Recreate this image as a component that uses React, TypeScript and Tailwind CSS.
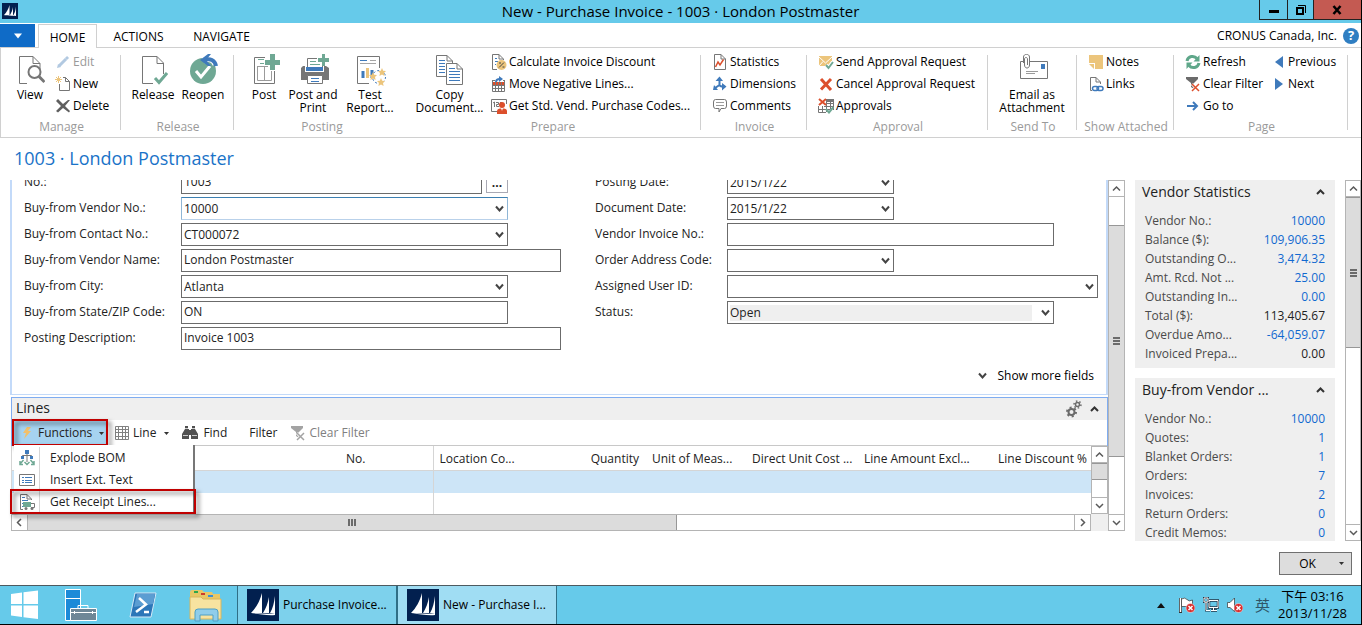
import { useId, type ReactNode } from "react";

const GREY = "#767676";
const BLUE = "#3f7abb";
const GREEN = "#6fa894";
const SAND = "#ecc57c";
const RED = "#dc4f2c";

type IconProps = { w: number; h: number; children: ReactNode };

function Icon({ w, h, children }: IconProps) {
  return (
    <svg
      width={w}
      height={h}
      viewBox={`0 0 ${w} ${h}`}
      fill="none"
      className="block shrink-0"
      aria-hidden="true"
    >
      {children}
    </svg>
  );
}

/* ---------- large ribbon icons ---------- */

const ViewIcon = () => (
  <Icon w={30} h={32}>
    <path d="M12 29.5H4.5V2.5H18L25 9.5V15M18 2.5V9.5H25" stroke={GREY} />
    <circle cx="19.500" cy="18" r="6" fill="#fff" stroke={GREY} strokeWidth="2" />
    <path d="M24 22.5L29.500 28" stroke={GREY} strokeWidth="3" />
  </Icon>
);

const ReleaseIcon = () => (
  <Icon w={30} h={32}>
    <path d="M15 29.5H4.500V2.500H19L25.500 9V20M19 2.500V9.500H25.500" stroke={GREY} />
    <path d="M17 24L21 28.500L29 19" stroke={GREEN} strokeWidth="3" />
  </Icon>
);

const ReopenIcon = () => (
  <Icon w={30} h={32}>
    <circle cx="15" cy="17" r="13" fill={GREEN} />
    <path d="M8 17L13 23L22 12" stroke="#fff" strokeWidth="3" />
    <path d="M28 11C27 5 21 3 15 6" stroke="#fff" strokeWidth="7" />
    <path d="M28 12C27 6 22 4 16 6" stroke={BLUE} strokeWidth="4" />
    <path d="M12 6L20 0H23L18 6L23 12H20Z" fill={BLUE} />
  </Icon>
);

const PostIcon = () => (
  <Icon w={32} h={32}>
    <path d="M17 3.500H6.500V29.500H26.500V17" stroke={GREY} />
    <path d="M9.500 12.500H20M9.500 12V26.500H23.500V17M16.500 12V26" stroke="#9b9b9b" />
    <path d="M10 5.500H16M12 9.500H16" stroke={GREEN} />
    <path d="M17 6h5V0h5v6h5v5h-5v5h-5v-5h-5z" fill={GREEN} />
  </Icon>
);

const PrintIcon = () => (
  <Icon w={32} h={32}>
    <path d="M10.500 13V4.500H20M25.500 13V10" stroke={GREY} />
    <path d="M13 7.500H19M13 10.500H23" stroke={GREEN} />
    <path d="M9 13H26V17H9Z" fill={BLUE} />
    <path d="M6 12H8V18H27V12H29L32 14V26H4V14Z" fill={GREY} />
    <path d="M10.500 21.500H25.500V29.500H10.500Z" fill="#fff" stroke={GREY} />
    <path d="M14 24.500H22M14 27.500H22" stroke={BLUE} />
    <path d="M21 4h4V0h3v4h4v4h-4v4h-3V8h-4z" fill={GREEN} />
  </Icon>
);

const STAR =
  "M0 -4L1.200 -1.300L4 -1L2 1L2.600 4L0 2.500L-2.600 4L-2 1L-4 -1L-1.200 -1.300Z";

const ReportIcon = () => (
  <Icon w={32} h={32}>
    <path d="M15 29.500H3.500V2.500H25.500V14" stroke={GREY} />
    <path d="M6 6.500H13" stroke={BLUE} />
    <path d="M6 9.500H22" stroke="#a5a5a5" />
    <path d="M16 6.500H22" stroke="#a5a5a5" />
    <path d="M9 24V17M18 24V16" stroke={BLUE} strokeWidth="3" />
    <path d="M13.500 24V14" stroke={SAND} strokeWidth="3" />
    <circle cx="25" cy="23" r="6.500" stroke={BLUE} strokeDasharray="2 2" />
    <path d={STAR} transform="translate(19 22)" fill={SAND} />
    <path d={STAR} transform="translate(28 18)" fill={SAND} />
    <path d={STAR} transform="translate(27 28)" fill={SAND} />
  </Icon>
);

const CopyIcon = () => (
  <Icon w={30} h={32}>
    <path d="M1.500 1.500H12L17.500 7V22.500H1.500Z" fill="#fff" stroke={GREY} />
    <path d="M12 1.500V7H17.500" stroke={GREY} />
    <path d="M4 6.500H10M4 9.500H10M4 12.500H10M4 15.500H10M4 18.500H10" stroke={BLUE} />
    <path d="M11.500 9.500H22L27.500 15V30.500H11.500Z" fill="#fff" stroke={GREY} />
    <path d="M22 9.500V15H27.500" stroke={GREY} />
    <path d="M14 14.500H20M14 17.500H25M14 20.500H25M14 23.500H25M14 26.500H25" stroke={BLUE} />
  </Icon>
);

const EmailIcon = () => (
  <Icon w={32} h={32}>
    <path d="M4.500 7.500H31.500V24.500H4.500Z" stroke={GREY} />
    <path d="M25 10H29V15H25Z" fill={BLUE} />
    <path d="M10 17.500H22M10 19.500H19" stroke="#9b9b9b" />
    <path
      d="M7.500 9V3C7.500 -0.500 13.500 -0.500 13.500 3V11C13.500 15 8.500 15 8.500 11V5C8.500 3 11.500 3 11.500 5V11"
      fill="#fff"
      stroke={GREY}
    />
  </Icon>
);

/* ---------- small ribbon icons ---------- */

const EditIcon = () => (
  <Icon w={16} h={16}>
    <path d="M4 12L11 5" stroke="#b2c9e1" strokeWidth="3" />
    <path d="M11 3L13 5" stroke="#b2c9e1" strokeWidth="3" />
    <path d="M2 14L3 10L6 13Z" fill="#b2c9e1" />
  </Icon>
);

const NewIcon = () => (
  <Icon w={16} h={16}>
    <path d="M8 1.500H10.500L14.500 5.500V14.500H4.500V8M10.500 1.500V5.500H14.500" stroke={GREY} />
    <path d="M3.500 0V7M0 3.500H7M1 1L6 6M6 1L1 6" stroke={SAND} />
  </Icon>
);

const DeleteIcon = () => (
  <Icon w={16} h={16}>
    <path d="M1 3L3 1L8 6L13 2L15 2L10 8L15 13L14 14.500L8 10L3 14.500L1 13L6 8Z" fill="#5f5f5f" />
  </Icon>
);

const DiscountIcon = () => (
  <Icon w={16} h={16}>
    <path d="M6 15.500H1.500V0.500H8L12.500 5V6M8 0.500V5H12" stroke={GREY} />
    <path d="M4 4.500H6M4 7.500H7M4 10.500H5" stroke={BLUE} />
    <circle cx="10.500" cy="11" r="5" fill={SAND} />
    <path d="M8 13.500L13 8.500M8 9H10M11.500 13H13.500" stroke="#444" />
  </Icon>
);

const MoveIcon = () => (
  <Icon w={16} h={16}>
    <path d="M1 4H4V5H1ZM12 4H14V5H12Z" fill={GREY} />
    <path d="M1 6H14V9H1Z" fill={RED} />
    <path d="M1.500 4V15.500H13.500V4M1 9.500H14M1 12.500H14M4.500 6V15M7.500 6V15M10.500 6V15" stroke={GREY} />
    <path d="M5 6C5 3 7 3 9 3" stroke={BLUE} strokeWidth="2" />
    <path d="M8 0L12 3L8 6Z" fill={BLUE} />
  </Icon>
);

const CodesIcon = () => (
  <Icon w={16} h={16}>
    <path d="M8 13.500H0.500V1.500H15.500V6" stroke={GREY} />
    <path d="M2 5L3.500 4V9M5 4.500H7.500V6.500H5.500V8.500H8M9 4.500H11" stroke={GREY} />
    <circle cx="11" cy="7" r="3" fill={RED} />
    <path d="M6 16V13C6 11 8 10.500 11 10.500S16 11 16 13V16Z" fill={RED} />
    <path d="M10 10H12L11 13Z" fill="#fff" />
  </Icon>
);

const StatisticsIcon = () => (
  <Icon w={16} h={16}>
    <path d="M2.500 0.500H9L13.500 5V15.500H2.500ZM9 0.500V5H13.500" stroke={GREY} />
    <path d="M3.500 13L6 8L8 11L11.500 5.500" stroke={RED} strokeWidth="1.500" />
  </Icon>
);

const DimensionsIcon = () => (
  <Icon w={16} h={16}>
    <path d="M7.500 3V9L3 12M7 9C9 11 11 11 13 10.500" stroke={BLUE} strokeWidth="2" />
    <path d="M3.500 5L7.500 0.500L11 5ZM2 9L6 14H1ZM10 7L14.500 10.500L10 14.500Z" fill={BLUE} />
  </Icon>
);

const CommentsIcon = () => (
  <Icon w={16} h={16}>
    <path
      d="M3.500 1.500H12.500Q14.500 1.500 14.500 4V8Q14.500 10.500 12.500 10.500H9L7 14V10.500H3.500Q1.500 10.500 1.500 8V4Q1.500 1.500 3.500 1.500Z"
      stroke={GREY}
    />
    <path d="M4 4.500H12M4 7.500H12" stroke="#9b9b9b" />
  </Icon>
);

const SendIcon = () => (
  <Icon w={16} h={16}>
    <path d="M1 2H14V12H1Z" fill={SAND} />
    <path d="M1 3L7.500 9L14 3M1 12L5 7.500" stroke="#fff" />
    <path d="M8 11L10.500 14L15 8" stroke="#fff" strokeWidth="4" />
    <path d="M8 11L10.500 14L15 8" stroke={GREEN} strokeWidth="2" />
  </Icon>
);

const CancelIcon = () => (
  <Icon w={16} h={16}>
    <path d="M3 3L13 14M13 3L3 13.500" stroke={RED} strokeWidth="3" />
  </Icon>
);

const ApprovalsIcon = () => (
  <Icon w={16} h={16}>
    <path d="M8 1.500H15.500V12M0.500 8V14.500H8M0 11.500H12M4.500 8V14M8.500 2V14M12.500 2V11M8 5.500H15M6 8.500H15" stroke={GREY} />
    <path d="M9 1H16V4H9Z" fill={GREY} />
    <path d="M1 1L8 7M8 1L1 7" stroke={RED} strokeWidth="2" />
    <path d="M8 11L11 14.500L15.500 9" stroke={GREEN} strokeWidth="2" />
  </Icon>
);

const NotesIcon = () => (
  <Icon w={16} h={16}>
    <path d="M1 1H15V15H7V9H1Z" fill={SAND} />
    <path d="M1 10H6V15Z" fill={SAND} />
  </Icon>
);

const LinksIcon = () => (
  <Icon w={16} h={16}>
    <path d="M4 14.500H2.500V1.500H8L12.500 6V8M8 1.500V6H12" stroke={GREY} />
    <rect x="4.500" y="10.500" width="6" height="4" rx="2" stroke={BLUE} strokeWidth="1.500" />
    <rect x="9" y="10.500" width="6" height="4" rx="2" stroke={BLUE} strokeWidth="1.500" />
  </Icon>
);

const RefreshIcon = () => (
  <Icon w={16} h={16}>
    <path d="M2 7C3 2 9 1 12 4.500M14 9C13 14 7 15 4 11.500" stroke="#5fa78a" strokeWidth="3" />
    <path d="M14.500 1V7.500H8.500ZM1.500 15V8.500H7.500Z" fill="#5fa78a" />
  </Icon>
);

function ClearFilterIcon({ muted }: { muted?: boolean }) {
  return (
    <Icon w={16} h={16}>
      <path d="M1 1H13V3L9 7V13L6 11V7L1 3Z" fill={muted ? "#a3a3a3" : "#6b6b6b"} />
      <path d="M7 8L14 15M14 8L7 15" stroke="#fff" strokeWidth="3" />
      <path d="M7 8L14 15M14 8L7 15" stroke={muted ? "#a3a3a3" : RED} strokeWidth="1.500" />
    </Icon>
  );
}

const GotoIcon = () => (
  <Icon w={16} h={16}>
    <path d="M2 8H12M8 4L12 8L8 12" stroke={BLUE} strokeWidth="2" />
  </Icon>
);

const PreviousIcon = () => (
  <Icon w={10} h={16}>
    <path d="M9 2V14L1 8Z" fill={BLUE} />
  </Icon>
);

const NextIcon = () => (
  <Icon w={10} h={16}>
    <path d="M1 2V14L9 8Z" fill={BLUE} />
  </Icon>
);

/* ---------- lines toolbar and menu icons ---------- */

const BoltIcon = () => (
  <Icon w={10} h={14}>
    <path d="M5 1H9L6 5H9L2 13L4 7H1Z" fill="#f2c069" />
  </Icon>
);

const GridIcon = () => (
  <Icon w={14} h={14}>
    <path
      d="M0.500 0.500H13.500V13.500H0.500ZM0.500 3.500H13.500M0.500 6.500H13.500M0.500 10.500H13.500M3.500 0.500V13.500M7.500 0.500V13.500M10.500 0.500V13.500"
      stroke="#808080"
    />
  </Icon>
);

const FindIcon = () => (
  <Icon w={16} h={14}>
    <path d="M3 0H6V3H7V13H0V8L3 3ZM10 0H13V3L16 8V13H9V3H10ZM6 4H10V9H6Z" fill="#505050" />
    <path d="M1 9.500H6M10 9.500H15M3 2.500H6M10 2.500H13" stroke="#ccc" />
  </Icon>
);

const BomIcon = () => (
  <Icon w={16} h={16}>
    <path d="M6 0H10V4H6ZM2 6H5V9H2ZM11 6H14V9H11Z" fill={BLUE} />
    <path d="M8 4V12M3.500 6V5.500H12.500V6" stroke={GREY} />
    <path d="M4.500 10L1 14M1 11V14.500H4M11.500 10L15 14M15 11V14.500H12M5.500 12L8 14.500L10.500 12" stroke={GREEN} strokeWidth="1.500" />
  </Icon>
);

const TextIcon = () => (
  <Icon w={16} h={16}>
    <path d="M0.500 2.500H15.500V13.500H0.500Z" fill="#fff" stroke={GREY} />
    <path d="M3 5.500H5M3 8.500H5M3 10.500H5" stroke={BLUE} />
    <path d="M6 5.500H13M6 8.500H13M6 10.500H13" stroke={BLUE} />
  </Icon>
);

const ReceiptIcon = () => (
  <Icon w={16} h={16}>
    <path d="M4 15.500H1.500V0.500H8L12.500 5V6M8 0.500V5H12" stroke={GREY} />
    <path d="M3 3.500H6M3 6.500H9M3 9.500H4M3 12.500H4" stroke={BLUE} />
    <path d="M4 8H12V13H4Z" fill={GREEN} />
    <path d="M12 9.500H15.500V13.500H12" stroke={GREY} />
    <circle cx="7" cy="14.500" r="1.500" fill={GREY} />
    <circle cx="13" cy="14.500" r="1.500" fill={GREY} />
  </Icon>
);

const GearsIcon = () => (
  <Icon w={16} h={18}>
    <circle cx="5.500" cy="12" r="3" stroke="#6b6b6b" strokeWidth="2" />
    <circle cx="5.500" cy="12" r="4.500" stroke="#6b6b6b" strokeWidth="2" strokeDasharray="2 2.700" />
    <circle cx="11.500" cy="4.500" r="2" stroke="#6b6b6b" strokeWidth="1.500" />
    <circle cx="11.500" cy="4.500" r="3.500" stroke="#6b6b6b" strokeWidth="1.500" strokeDasharray="1.500 2.100" />
  </Icon>
);

const ChevronDown = () => (
  <Icon w={9} h={8}>
    <path d="M1 1.500L4.500 5.500L8 1.500" stroke="#444" strokeWidth="2" />
  </Icon>
);

const ChevronUp = () => (
  <Icon w={9} h={8}>
    <path d="M1 6L4.500 2.500L8 6" stroke="#333" strokeWidth="2" />
  </Icon>
);

const Caret = () => (
  <Icon w={5} h={3}>
    <path d="M0 0H5L2.500 3Z" fill="#333" />
  </Icon>
);

function SailLogo({ size }: { size: number }) {
  return (
    <svg width={size} height={size} viewBox="0 0 32 32" className="block shrink-0" aria-hidden="true">
      <path d="M0 0H32V32H0Z" fill="#02204f" />
      <path d="M15 4V24H4C9 19 13 12 15 4ZM22 8V24H16C19 19 21 14 22 8ZM28 7V24H23C26 19 27 14 28 7Z" fill="#fff" />
      <path d="M3 25C10 23 20 26 28 24V26C19 27 10 24 3 25Z" fill="#fff" />
    </svg>
  );
}

/* ---------- ribbon ---------- */

function Group({ label, className, children }: { label: string; className: string; children: ReactNode }) {
  return (
    <section aria-label={label} className={`flex shrink-0 ${className}`}>
      <div className="flex-1">
        <div className="flex h-[68px]">{children}</div>
        <div className="pl-[2px] text-center leading-4 text-[#9a9a9a]">{label}</div>
      </div>
      <div className="mt-1 h-[75px] w-px bg-[#d0d0d0]" />
    </section>
  );
}

function BigButton({ icon, label, className }: { icon: ReactNode; label: string; className: string }) {
  return (
    <button type="button" className={`flex shrink-0 flex-col items-center pt-[3px] ${className}`}>
      {icon}
      <span className="pt-[2px] leading-[13px] whitespace-pre">{label}</span>
    </button>
  );
}

function SmallButton({ icon, disabled, children }: { icon: ReactNode; disabled?: boolean; children: ReactNode }) {
  return (
    <button type="button" disabled={disabled} className="flex h-[22px] items-center gap-[2px] whitespace-nowrap disabled:text-[#9a9a9a]">
      {icon}
      {children}
    </button>
  );
}

function Ribbon() {
  return (
    <div className="flex h-[91px] overflow-hidden border-y border-l border-[#d0d0d0] pt-[3px]">
      <Group label="Manage" className="w-[120px]">
        <BigButton icon={<ViewIcon />} label="View" className="w-[54px] pl-1" />
        <div>
          <SmallButton icon={<EditIcon />} disabled>Edit</SmallButton>
          <SmallButton icon={<NewIcon />}>New</SmallButton>
          <SmallButton icon={<DeleteIcon />}>Delete</SmallButton>
        </div>
      </Group>
      <Group label="Release" className="w-[113px]">
        <BigButton icon={<ReleaseIcon />} label="Release" className="w-[64px]" />
        <BigButton icon={<ReopenIcon />} label="Reopen" className="w-[36px]" />
      </Group>
      <Group label="Posting" className="w-[170px]">
        <BigButton icon={<PostIcon />} label="Post" className="w-[60px]" />
        <BigButton icon={<PrintIcon />} label={"Post and\nPrint"} className="w-[38px]" />
        <BigButton icon={<ReportIcon />} label={"Test\nReport..."} className="w-[76px]" />
      </Group>
      <Group label="Prepare" className="w-[297px]">
        <BigButton icon={<CopyIcon />} label={"Copy\nDocument..."} className="w-[87px] pl-1" />
        <div>
          <SmallButton icon={<DiscountIcon />}>Calculate Invoice Discount</SmallButton>
          <SmallButton icon={<MoveIcon />}>Move Negative Lines...</SmallButton>
          <SmallButton icon={<CodesIcon />}>Get Std. Vend. Purchase Codes...</SmallButton>
        </div>
      </Group>
      <Group label="Invoice" className="w-[106px]">
        <div className="pl-[11px]">
          <SmallButton icon={<StatisticsIcon />}>Statistics</SmallButton>
          <SmallButton icon={<DimensionsIcon />}>Dimensions</SmallButton>
          <SmallButton icon={<CommentsIcon />}>Comments</SmallButton>
        </div>
      </Group>
      <Group label="Approval" className="w-[181px]">
        <div className="pl-[11px]">
          <SmallButton icon={<SendIcon />}>Send Approval Request</SmallButton>
          <SmallButton icon={<CancelIcon />}>Cancel Approval Request</SmallButton>
          <SmallButton icon={<ApprovalsIcon />}>Approvals</SmallButton>
        </div>
      </Group>
      <Group label="Send To" className="w-[89px]">
        <BigButton icon={<EmailIcon />} label={"Email as\nAttachment"} className="w-[88px]" />
      </Group>
      <Group label="Show Attached" className="w-[97px]">
        <div className="pl-[11px]">
          <SmallButton icon={<NotesIcon />}>Notes</SmallButton>
          <SmallButton icon={<LinksIcon />}>Links</SmallButton>
        </div>
      </Group>
      <Group label="Page" className="w-[174px]">
        <div className="w-[100px] pl-[11px]">
          <SmallButton icon={<RefreshIcon />}>Refresh</SmallButton>
          <SmallButton icon={<ClearFilterIcon />}>Clear Filter</SmallButton>
          <SmallButton icon={<GotoIcon />}>Go to</SmallButton>
        </div>
        <div>
          <SmallButton icon={<PreviousIcon />}>
            <span className="pl-[2px]">Previous</span>
          </SmallButton>
          <SmallButton icon={<NextIcon />}>
            <span className="pl-[2px]">Next</span>
          </SmallButton>
        </div>
      </Group>
    </div>
  );
}

/* ---------- scrollbars ---------- */

function Arrow({ d }: { d: string }) {
  return (
    <Icon w={9} h={9}>
      <path d={d} stroke="#5a5a5a" strokeWidth="1.500" />
    </Icon>
  );
}

type VScrollProps = { width: string; before: string; thumb: string; grip?: boolean };

function VScroll({ width, before, thumb, grip }: VScrollProps) {
  return (
    <div className={`flex shrink-0 flex-col border border-[#b4b4b4] bg-white ${width}`}>
      <button type="button" aria-label="Scroll up" className="flex h-4 shrink-0 items-center justify-center border-b border-[#b4b4b4]">
        <Arrow d="M1 6.500L4.500 3L8 6.500" />
      </button>
      <div className={before} />
      <div className={`flex flex-col items-center justify-center gap-px border-y border-[#979797] bg-[#dcdcdc] ${thumb}`}>
        {grip && [0, 1, 2].map((i) => <div key={i} className="h-[2px] w-[7px] bg-[#6b6b6b]" />)}
      </div>
      <div className="flex-1" />
      <button type="button" aria-label="Scroll down" className="flex h-4 shrink-0 items-center justify-center border-t border-[#b4b4b4]">
        <Arrow d="M1 3L4.500 6.500L8 3" />
      </button>
    </div>
  );
}

/* ---------- general fast tab ---------- */

type FieldProps = {
  label: string;
  value?: string;
  width: string;
  kind?: "text" | "select";
  active?: boolean;
  readOnly?: boolean;
  assist?: boolean;
  labelWidth: string;
};

function Field({ label, value = "", width, kind = "text", active, readOnly, assist, labelWidth }: FieldProps) {
  const id = useId();
  const border = active
    ? "border-x-[#8fb6d6] border-t-[#3c7fb1] border-b-[#b9d1ea]"
    : "border-[#6b6b6b]";
  return (
    <div className="flex h-[23px]">
      <label htmlFor={id} className={`shrink-0 leading-[22px] ${labelWidth}`}>
        {label}
      </label>
      <div className={`flex items-center border bg-white ${border} ${width}`}>
        {kind === "select" ? (
          <>
            <select
              id={id}
              defaultValue={value}
              className={`h-4 min-w-0 flex-1 appearance-none leading-4 outline-none ${readOnly ? "mr-[9px] ml-[2px] bg-[#efefef]" : "pl-[2px]"}`}
            >
              <option value={value}>{value}</option>
            </select>
            <span className="pointer-events-none pr-[3px]">
              <ChevronDown />
            </span>
          </>
        ) : (
          <input id={id} defaultValue={value} className="h-5 w-full min-w-0 pb-[2px] pl-[2px] outline-none" />
        )}
      </div>
      {assist && (
        <button
          type="button"
          aria-label="Number series"
          className="ml-1 h-[22px] w-[22px] border border-[#a9a9b4] bg-white leading-[22px] font-bold"
        >
          ...
        </button>
      )}
    </div>
  );
}

function GeneralTab() {
  const l = "w-[157px]";
  const r = "w-[132px]";
  return (
    <div className="flex h-[215px] flex-col justify-end overflow-hidden border-x-2 border-b border-[#c3daf9] pr-2 pl-3">
      <div className="grid grid-cols-[537fr_503fr] gap-x-[34px]">
        <div className="space-y-[3px]">
          <Field label="No.:" value="1003" width="w-[301px]" labelWidth={l} assist />
          <Field label="Buy-from Vendor No.:" value="10000" width="w-[327px]" labelWidth={l} kind="select" active />
          <Field label="Buy-from Contact No.:" value="CT000072" width="w-[327px]" labelWidth={l} kind="select" />
          <Field label="Buy-from Vendor Name:" value="London Postmaster" width="flex-1" labelWidth={l} />
          <Field label="Buy-from City:" value="Atlanta" width="w-[327px]" labelWidth={l} kind="select" />
          <Field label="Buy-from State/ZIP Code:" value="ON" width="w-[327px]" labelWidth={l} />
          <Field label="Posting Description:" value="Invoice 1003" width="flex-1" labelWidth={l} />
        </div>
        <div className="space-y-[3px]">
          <Field label="Posting Date:" value="2015/1/22" width="w-[167px]" labelWidth={r} kind="select" />
          <Field label="Document Date:" value="2015/1/22" width="w-[167px]" labelWidth={r} kind="select" />
          <Field label="Vendor Invoice No.:" width="w-[327px]" labelWidth={r} />
          <Field label="Order Address Code:" width="w-[167px]" labelWidth={r} kind="select" />
          <Field label="Assigned User ID:" width="flex-1" labelWidth={r} kind="select" />
          <Field label="Status:" value="Open" width="w-[327px]" labelWidth={r} kind="select" readOnly />
        </div>
      </div>
      <button type="button" className="mt-[16px] mb-[9px] flex items-center gap-[10px] self-end pr-1 leading-[19px] text-black">
        <ChevronDown />
        Show more fields
      </button>
    </div>
  );
}

/* ---------- lines fast tab ---------- */

const columns = [
  { name: "No.", className: "w-[93px] text-left pl-[6px]" },
  { name: "Location Co...", className: "w-[112px] border-l border-[#d5d5d5] text-left pl-[6px]" },
  { name: "Quantity", className: "w-[101px] text-right pr-[7px]" },
  { name: "Unit of Meas...", className: "w-[100px] text-left pl-[6px]" },
  { name: "Direct Unit Cost ...", className: "w-[112px] text-left pl-[6px]" },
  { name: "Line Amount Excl...", className: "w-[120px] text-left pl-[6px]" },
  { name: "Line Discount %", className: "w-[113px] text-right pr-1" },
];

function Highlight({ className }: { className: string }) {
  return (
    <div
      className={`pointer-events-none absolute border-2 border-[#c00000] drop-shadow-[3px_3px_2px_rgba(0,0,0,0.55)] ${className}`}
    />
  );
}

function FunctionsMenu() {
  const items = [
    { icon: <BomIcon />, name: "Explode BOM" },
    { icon: <TextIcon />, name: "Insert Ext. Text" },
    { icon: <ReceiptIcon />, name: "Get Receipt Lines..." },
  ];
  return (
    <div role="menu" className="absolute top-full left-[2px] z-10 w-[181px] border-r-2 border-[#777] bg-white pt-[2px]">
      {items.map((it) => (
        <button key={it.name} type="button" role="menuitem" className="flex h-[22px] w-full items-center">
          <span className="flex h-full w-[26px] items-center border-r border-[#d5d5d5] pl-[5px]">{it.icon}</span>
          <span className="pl-[10px]">{it.name}</span>
        </button>
      ))}
      <Highlight className="bottom-[-1px] left-[-4px] h-[25px] w-[186px]" />
    </div>
  );
}

function LinesTab() {
  return (
    <div className="mt-[2px] ml-px border-t border-[#7facf0]">
      <div className="border-x border-[#7facf0]">
        <div className="flex h-[22px] items-center justify-between bg-[#efefef] pr-2 pl-1">
          <h2 className="pb-[2px] text-sm">Lines</h2>
          <div className="flex items-center gap-2">
            <button type="button" aria-label="Customize">
              <GearsIcon />
            </button>
            <button type="button" aria-label="Collapse lines">
              <ChevronUp />
            </button>
          </div>
        </div>
        <div className="relative flex h-[26px] items-center border-b border-[#c8c8c8]">
          <button type="button" aria-expanded="true" className="flex h-full w-[95px] items-center bg-[#a6d3f0] pt-px pl-[10px]">
            <BoltIcon />
            <span className="flex-1 pl-[6px] text-left">Functions</span>
            <span className="pr-[3px]">
              <Caret />
            </span>
          </button>
          <button type="button" className="ml-2 flex items-center pt-px">
            <GridIcon />
            <span className="pr-2 pl-1">Line</span>
            <Caret />
          </button>
          <button type="button" className="ml-[13px] flex items-center gap-[5px] pt-px">
            <FindIcon />
            Find
          </button>
          <button type="button" className="ml-[22px] pt-px">
            Filter
          </button>
          <button type="button" disabled className="ml-3 flex items-center gap-1 pt-px text-[#808080]">
            <ClearFilterIcon muted />
            Clear Filter
          </button>
          <Highlight className="top-[-1px] left-0 h-[27px] w-24" />
          <FunctionsMenu />
        </div>
      </div>
      <div className="flex h-[68px]">
        <div className="min-w-0 flex-1 overflow-hidden border-l border-[#d5d5d5]">
          <table className="w-full table-fixed border-collapse whitespace-nowrap">
            <thead>
              <tr className="h-6 border-b border-[#d5d5d5]">
                <th aria-label="Type" />
                {columns.map((c) => (
                  <th key={c.name} scope="col" className={`pt-[2px] font-normal ${c.className}`}>
                    {c.name}
                  </th>
                ))}
              </tr>
            </thead>
            <tbody>
              <tr className="h-[23px] bg-[#cde5f7]">
                <td />
                {columns.map((c) => (
                  <td key={c.name} className={c.className} />
                ))}
              </tr>
              <tr className="h-[22px]">
                <td />
                {columns.map((c) => (
                  <td key={c.name} className={c.className} />
                ))}
              </tr>
            </tbody>
          </table>
        </div>
        <VScroll width="w-[17px]" before="h-0" thumb="h-[17px]" />
      </div>
      <div className="flex h-[17px]">
        <div className="flex min-w-0 flex-1 border border-[#b4b4b4] bg-white">
          <button type="button" aria-label="Scroll left" className="flex w-4 items-center justify-center border-r border-[#b4b4b4]">
            <Arrow d="M6 1L2.500 4.500L6 8" />
          </button>
          <div className="min-w-0 flex-1">
            <div className="flex h-full w-[62%] items-center justify-center gap-px border-r border-[#979797] bg-[#dcdcdc]">
              {[0, 1, 2].map((i) => (
                <div key={i} className="h-[7px] w-[2px] bg-[#6b6b6b]" />
              ))}
            </div>
          </div>
          <button type="button" aria-label="Scroll right" className="flex w-4 items-center justify-center border-l border-[#b4b4b4]">
            <Arrow d="M3 1L6.500 4.500L3 8" />
          </button>
        </div>
        <div className="w-[17px] bg-[#efefef]" />
      </div>
    </div>
  );
}

/* ---------- fact boxes ---------- */

type Fact = { name: string; value: string; plain?: boolean };

const statistics: Fact[] = [
  { name: "Vendor No.:", value: "10000" },
  { name: "Balance ($):", value: "109,906.35" },
  { name: "Outstanding O...", value: "3,474.32" },
  { name: "Amt. Rcd. Not ...", value: "25.00" },
  { name: "Outstanding In...", value: "0.00" },
  { name: "Total ($):", value: "113,405.67", plain: true },
  { name: "Overdue Amo...", value: "-64,059.07" },
  { name: "Invoiced Prepa...", value: "0.00", plain: true },
];

const history: Fact[] = [
  { name: "Vendor No.:", value: "10000" },
  { name: "Quotes:", value: "1" },
  { name: "Blanket Orders:", value: "1" },
  { name: "Orders:", value: "7" },
  { name: "Invoices:", value: "2" },
  { name: "Return Orders:", value: "0" },
  { name: "Credit Memos:", value: "0" },
];

function FactBox({ title, facts }: { title: string; facts: Fact[] }) {
  return (
    <section className="shrink-0 bg-[#efefef] pb-[5px]">
      <div className="flex h-6 items-center justify-between pr-[10px] pl-[7px]">
        <h2 className="text-sm">{title}</h2>
        <button type="button" aria-label={`Collapse ${title}`}>
          <ChevronUp />
        </button>
      </div>
      <dl className="pt-[7px] pr-[10px] pl-[10px]">
        {facts.map((f) => (
          <div key={f.name} className="flex justify-between leading-[19px]">
            <dt className="text-[#4a4a4a]">{f.name}</dt>
            <dd>
              {f.plain ? (
                f.value
              ) : (
                <a href="#" className="text-[#1169d0]">
                  {f.value}
                </a>
              )}
            </dd>
          </div>
        ))}
      </dl>
    </section>
  );
}

/* ---------- window chrome ---------- */

function TitleBar() {
  return (
    <header className="grid h-[23px] grid-cols-[1fr_auto_1fr] bg-[#66caea]">
      <div className="pt-[3px] pl-[2px]">
        <SailLogo size={16} />
      </div>
      <h1 className="text-[15px] leading-[23px] text-black">New - Purchase Invoice - 1003 · London Postmaster</h1>
      <div className="flex h-5 justify-end">
        <button type="button" aria-label="Minimize" className="flex w-[29px] items-center justify-center border-x border-b border-[#222]">
          <Icon w={10} h={10}>
            <path d="M0 5H10V8H0Z" fill="#000" />
          </Icon>
        </button>
        <button type="button" aria-label="Restore" className="flex w-[26px] items-center justify-center border-r border-b border-[#222]">
          <Icon w={10} h={10}>
            <path d="M1 3H7V9H1Z" stroke="#000" strokeWidth="2" />
            <path d="M2 0.500H9.500V8" stroke="#000" />
          </Icon>
        </button>
        <button type="button" aria-label="Close" className="flex w-[47px] items-center justify-center border-b border-[#222] bg-[#c45a52] pr-[2px]">
          <Icon w={10} h={10}>
            <path d="M1.500 1L8.500 9M8.500 1L1.500 9" stroke="#000" strokeWidth="2.500" />
          </Icon>
        </button>
      </div>
    </header>
  );
}

function Tabs() {
  return (
    <nav className="flex h-6 pt-px">
      <button type="button" aria-label="Application menu" className="flex w-[35px] items-center justify-center bg-[#0f6bc7]">
        <Icon w={8} h={6}>
          <path d="M0 0.500H8L4 5.500Z" fill="#fff" />
        </Icon>
      </button>
      <button type="button" className="z-10 -mb-px ml-[3px] w-[59px] border border-b-0 border-[#d0d0d0] bg-white pt-[2px]">
        HOME
      </button>
      <button type="button" className="w-[83px] pt-[3px]">ACTIONS</button>
      <button type="button" className="w-[83px] pt-[3px]">NAVIGATE</button>
      <div className="ml-auto flex items-center gap-[6px] pt-px pr-[2px]">
        CRONUS Canada, Inc.
        <button type="button" aria-label="Help" className="flex h-4 w-4 items-center justify-center rounded-full bg-[#2f7ec2] text-[13px] font-bold text-white">
          ?
        </button>
      </div>
    </nav>
  );
}

const ErrorBadge = () => (
  <>
    <circle cx="11.500" cy="11" r="4.500" fill="#d92b2b" stroke="#fff" strokeWidth="0.500" />
    <path d="M9.500 9L13.500 13M13.500 9L9.500 13" stroke="#fff" strokeWidth="1.500" />
  </>
);

function TaskButton({ active, children }: { active?: boolean; children: ReactNode }) {
  return (
    <button
      type="button"
      className={`flex w-40 items-center gap-1 border-x border-[#2f6f86] pl-[9px] ${active ? "bg-[#a0ddf3]" : "bg-[#7dd1ec]"}`}
    >
      <SailLogo size={32} />
      {children}
    </button>
  );
}

function Taskbar() {
  return (
    <footer className="flex h-10 border-t border-b border-t-[#4d5a60] border-b-black bg-[#66caea] text-black">
      <button type="button" aria-label="Start" className="w-12 pl-[11px]">
        <Icon w={28} h={30}>
          <path d="M0 4L11 2.500V14H0ZM12.500 2.300L27 0.500V14H12.500ZM0 15.500H11V27L0 25.500ZM12.500 15.500H27V29L12.500 27.200Z" fill="#fff" />
        </Icon>
      </button>
      <button type="button" aria-label="Server Manager" className="w-[70px] pl-[17px]">
        <Icon w={33} h={36}>
          <path d="M0.500 2.500H15.500V33.500H0.500Z" fill="#1c8ad8" stroke="#fff" />
          <path d="M1 11.500H15" stroke="#fff" />
          <path d="M13 21V18.500H23V21" stroke="#fff" />
          <path d="M5.500 21.500H31.500V33.500H5.500Z" fill="#6f8797" stroke="#fff" />
          <path d="M6 25.500H31M9.500 24V27M27.500 24V27" stroke="#fff" />
        </Icon>
      </button>
      <button type="button" aria-label="PowerShell" className="w-[70px] pl-[11px]">
        <Icon w={28} h={28}>
          <path d="M6 2H27L22 26H1Z" fill="#2c76b8" stroke="#d5e9f7" />
          <path d="M8 3H26L24 13L5 16Z" fill="#5b9dd2" />
          <path d="M10 7L17 13.500L7 21M15 21H20" stroke="#fff" strokeWidth="2.500" />
        </Icon>
      </button>
      <button type="button" aria-label="File Explorer" className="w-[49px]">
        <Icon w={34} h={34}>
          <path d="M2 4Q2 2 4 2H14L16 4H24L25 6H32V28H2Z" fill="#e8c766" />
          <path d="M6 3H10V5H6Z" fill="#2fa84b" />
          <path d="M13 5H17V7H13Z" fill="#cc3b2e" />
          <path d="M20 7H25V9H20Z" fill="#3a8fd8" />
          <path d="M2 9H13L15 11H33V31H2Z" fill="#f7e3a0" stroke="#d9b65c" />
          <path d="M7 33V24Q7 21 10 21H27Q30 21 30 24V33H25V27H12V33Z" fill="#8fcdea" stroke="#4f9fc4" />
        </Icon>
      </button>
      <TaskButton>Purchase Invoice...</TaskButton>
      <TaskButton active>New - Purchase I...</TaskButton>
      <div className="ml-auto flex items-center pr-[14px]">
        <button type="button" aria-label="Show hidden icons" className="mr-[14px]">
          <Icon w={8} h={5}>
            <path d="M0 5L4 0L8 5Z" fill="#111" />
          </Icon>
        </button>
        <div className="flex gap-2">
          <Icon w={16} h={16}>
            <path d="M1.500 1V16" stroke="#333" strokeWidth="3" />
            <path d="M1.500 1V15" stroke="#fff" strokeWidth="1.500" />
            <path d="M2.500 2Q6 0 8 2.500T13.500 3V9.500H2.500Z" fill="#fff" stroke="#333" strokeWidth="0.700" />
            <ErrorBadge />
          </Icon>
          <Icon w={16} h={16}>
            <path d="M6 3.500H15V10.500H6ZM8 13.500H14M10.500 11V13" stroke="#234" strokeWidth="2.500" />
            <path d="M6 3.500H15V10.500H6ZM8 13.500H14M10.500 11V13" stroke="#fff" />
            <path d="M1 1H5V5H1ZM3 5V13.500H7" stroke="#234" strokeWidth="2" />
            <path d="M1 1H5V5H1ZM3 5V13.500H7" stroke="#fff" />
          </Icon>
          <Icon w={16} h={16}>
            <path d="M0.500 5.500H3L7.500 1V14.500L3 10.500H0.500Z" fill="#fff" stroke="#333" strokeWidth="0.700" />
            <ErrorBadge />
          </Icon>
        </div>
        <span className="ml-3 text-[15px] text-[#2f5668]">英</span>
        <time className="ml-2 text-center text-[13px] leading-[17px]">
          下午 03:16
          <br />
          2013/11/28
        </time>
      </div>
    </footer>
  );
}

export default function App() {
  return (
    <div className="border-r border-black bg-white font-['Open_Sans','Noto_Sans_CJK_TC',sans-serif] text-xs text-[#222]">
      <TitleBar />
      <div className="text-black">
        <Tabs />
        <Ribbon />
      </div>
      <h2 className="pt-[6px] pb-px pl-[14px] text-lg leading-[28px] text-[#1a73c8]">1003 · London Postmaster</h2>
      <main className="mt-[7px] flex h-[361px] pl-[10px]">
        <div className="min-w-0 flex-1">
          <GeneralTab />
          <LinesTab />
        </div>
        <div className="mr-[10px] mb-[10px] flex">
          <VScroll width="w-[17px]" before="h-7" thumb="h-[232px]" grip />
        </div>
        <aside className="mr-[10px] flex w-[200px] shrink-0 flex-col gap-[10px] overflow-hidden">
          <FactBox title="Vendor Statistics" facts={statistics} />
          <FactBox title="Buy-from Vendor ..." facts={history} />
        </aside>
        <VScroll width="w-4" before="h-0" thumb="h-[151px]" grip />
      </main>
      <div className="flex justify-end pt-[11px] pr-[9px] pb-[10px]">
        <button type="button" className="flex h-[23px] w-[73px] items-center border border-[#707070] bg-[#dddddd] pr-[7px] text-black">
          <span className="flex-1 pr-1">OK</span>
          <Caret />
        </button>
      </div>
      <Taskbar />
    </div>
  );
}
